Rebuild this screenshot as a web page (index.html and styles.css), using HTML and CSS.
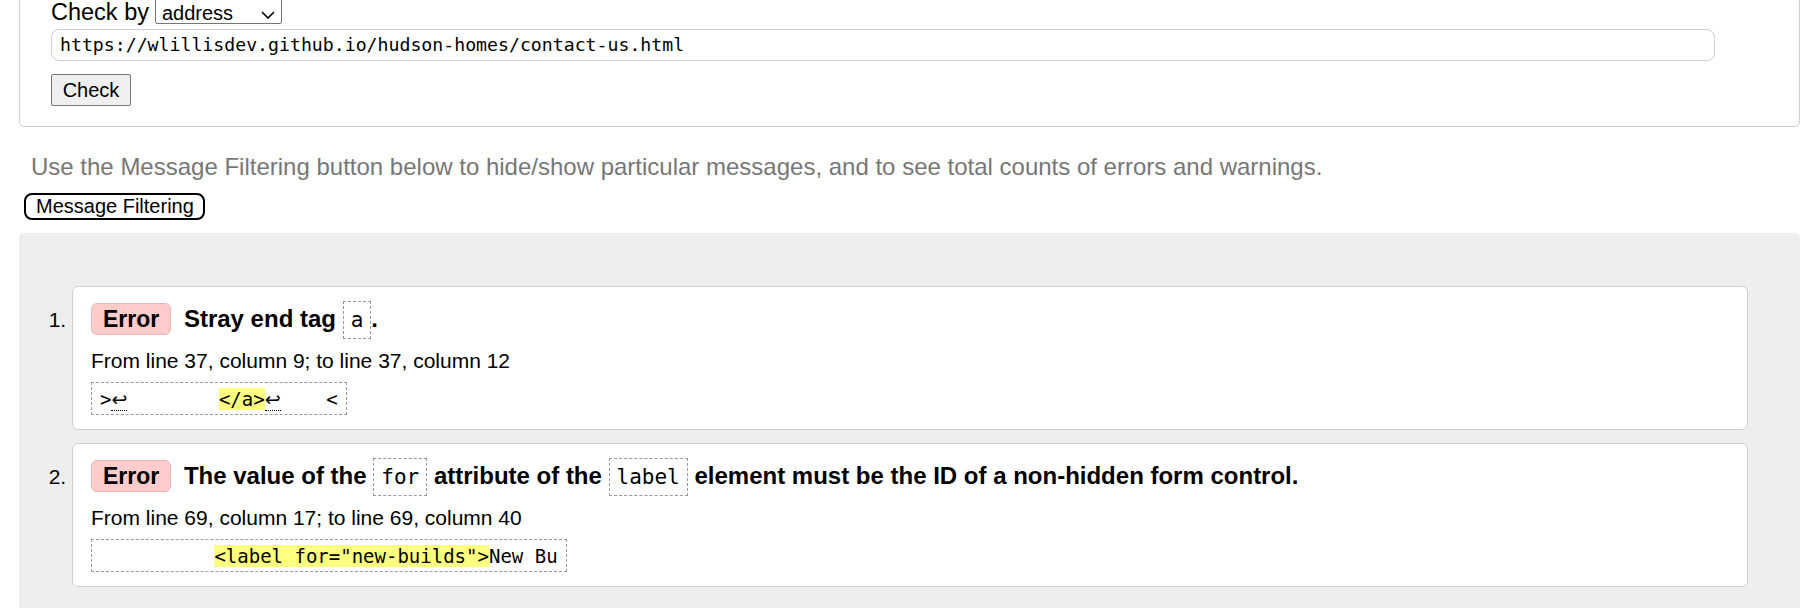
FILE: index.html
```html
<!DOCTYPE html>
<html lang="en">
<head>
<meta charset="utf-8">
<title>Nu Html Checker</title>
<link rel="stylesheet" href="styles.css">
</head>
<body>
<div class="page">
  <form class="checkform">
    <div class="checkby">
      <span class="checkby-label">Check by</span>
      <span class="select"><span class="select-text">address</span><svg class="chev" width="14" height="8" viewBox="0 0 14 8"><path d="M1 1 L7 7 L13 1" fill="none" stroke="#000" stroke-width="1.6"/></svg></span>
    </div>
    <div class="url">https://wlillisdev.github.io/hudson-homes/contact-us.html</div>
    <div class="check-row"><span class="check">Check</span></div>
  </form>

  <p class="intro">Use the Message Filtering button below to hide/show particular messages, and to see total counts of errors and warnings.</p>
  <div class="filter-row"><span class="filter">Message Filtering</span></div>

  <div class="results">
    <ol class="msgs">
      <li class="msg">
        <p class="title"><span class="badge">Error</span> Stray end tag <code class="cd">a</code>.</p>
        <p class="loc">From line 37, column 9; to line 37, column 12</p>
        <div class="extract"><code>&gt;<span class="lf">↩</span>        <b class="hl">&lt;/a&gt;</b><span class="lf">↩</span>    &lt;</code></div>
      </li>
      <li class="msg">
        <p class="title"><span class="badge">Error</span> The value of the <code class="cd">for</code> attribute of the <code class="cd">label</code> element must be the ID of a non-hidden form control.</p>
        <p class="loc">From line 69, column 17; to line 69, column 40</p>
        <div class="extract"><code>          <b class="hl">&lt;label for="new-builds"&gt;</b>New Bu</code></div>
      </li>
    </ol>
  </div>
</div>
</body>
</html>
```

FILE: styles.css
```css
html, body {
  margin: 0;
  padding: 0;
  background: #fff;
  overflow: hidden;
}

body {
  font-family: "Liberation Sans", Arial, sans-serif;
  color: #000;
}

.page {
  width: 1808px;
}

.checkform {
  margin: -30px 8px 0 19px;
  padding: 25px 84px 20px 31px;
  border: 1px solid #cfcfcf;
  border-radius: 5px;
  background: #fff;
}

.checkby {
  display: flex;
  align-items: baseline;
  height: 28px;
  line-height: 28px;
}

.checkby-label {
  font-size: 23.5px;
  margin-right: 6px;
}

.select {
  display: inline-flex;
  align-items: center;
  box-sizing: border-box;
  width: 127px;
  height: 28px;
  padding: 0 6px 0 6px;
  border: 1px solid #767676;
  border-radius: 2px;
  background: #fff;
  font-size: 20px;
  line-height: 26px;
  justify-content: space-between;
}

.select-text {
  padding-top: 6px;
}

.chev {
  display: block;
  margin-top: 9px;
}

.url {
  box-sizing: border-box;
  margin-top: 5px;
  height: 32px;
  padding: 0 8px;
  border: 1px solid #cfcfcf;
  border-radius: 8px;
  font-family: "DejaVu Sans Mono", "Liberation Mono", monospace;
  font-size: 18.2px;
  line-height: 30px;
  white-space: pre;
}

.check-row {
  margin-top: 13px;
  display: flex;
}

.check {
  box-sizing: border-box;
  display: inline-flex;
  align-items: center;
  justify-content: center;
  width: 80px;
  height: 32px;
  border: 1px solid #767676;
  border-radius: 2px;
  background: #efefef;
  font-size: 20px;
}

.intro {
  margin: 26px 0 0 31px;
  font-size: 24px;
  line-height: 27px;
  color: #777777;
}

.filter-row {
  margin-top: 13px;
  margin-left: 24px;
  display: flex;
}

.filter {
  display: inline-block;
  height: 27px;
  box-sizing: border-box;
  padding: 0 9px 0 10px;
  border: 2px solid #000;
  border-radius: 8px;
  font-size: 20px;
  line-height: 23px;
  background: #fff;
}

.results {
  margin: 13px 8px 0 19px;
  padding: 53px 52px 40px 53px;
  background: #eeeeee;
  border-radius: 5px;
}

.msgs {
  margin: 0;
  padding: 0;
  list-style: decimal outside;
}

.msg {
  background: #fff;
  border: 1px solid #cfcfcf;
  border-radius: 6px;
  padding: 14px 18px 14px 18px;
  margin-bottom: 13px;
  font-size: 21px;
}

.msg::marker {
  font-size: 21px;
}

.title {
  margin: 0;
  font-size: 24px;
  font-weight: bold;
  line-height: 27px;
}

.badge {
  display: inline-block;
  padding: 2px 11px;
  margin-right: 6px;
  border: 1px solid #e8b8b8;
  border-radius: 6px;
  background: #ffcccc;
  font-size: 23px;
  line-height: 26px;
}

.cd {
  display: inline-block;
  padding: 6px 7px;
  border: 1px dashed #999;
  font-family: "DejaVu Sans Mono", "Liberation Mono", monospace;
  font-size: 21px;
  font-weight: normal;
  line-height: 24px;
}

.loc {
  margin: 10px 0 0 0;
  font-size: 21px;
  line-height: 24px;
}

.extract {
  margin-top: 9px;
  width: fit-content;
  padding: 5px 8px 4px;
  border: 1px dashed #999;
}

.extract code {
  display: block;
  font-family: "DejaVu Sans Mono", "Liberation Mono", monospace;
  font-size: 19px;
  line-height: 22px;
  white-space: pre;
}

.hl {
  font-weight: normal;
  background: #ffff80;
}

.lf {
  font-family: "DejaVu Sans", sans-serif;
  border-bottom: 1px dotted #000;
}
```
